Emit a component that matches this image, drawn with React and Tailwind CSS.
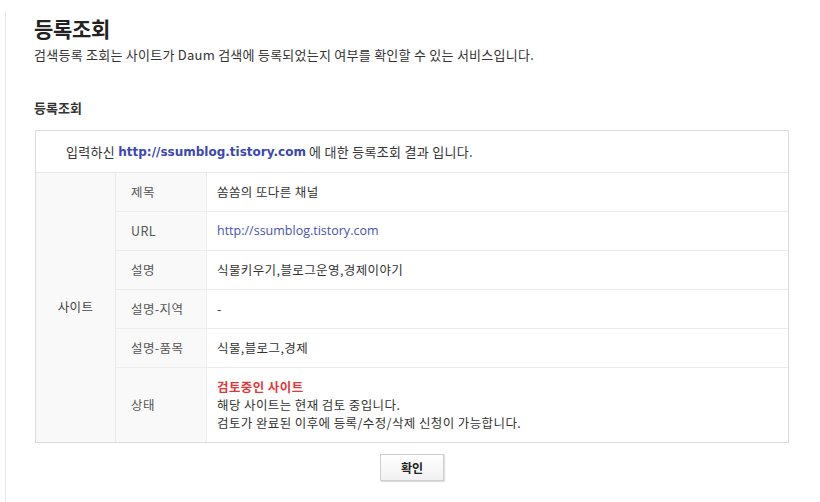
import React from 'react'

const rows = [
  { label: '제목', value: '쏨쏨의 또다른 채널' },
  { label: 'URL', value: 'http://ssumblog.tistory.com', link: true },
  { label: '설명', value: '식물키우기,블로그운영,경제이야기' },
  { label: '설명-지역', value: '-' },
  { label: '설명-품목', value: '식물,블로그,경제' },
]

const kr = { fontFamily: '"Noto Sans CJK KR", "Noto Sans", sans-serif' }

const App = () => {
  return (
    <div className="w-[820px] h-[502px] bg-white overflow-hidden" style={kr}>
      <div className="ml-[5px] mt-3 h-[490px] border-l border-[#e6e6e6] pl-[28px]">
        <h2 className="pt-[2px] text-[21px] font-bold leading-[28px] text-[#222] tracking-[-0.3px]">등록조회</h2>
        <p className="mt-[4px] text-[13px] leading-[18px] text-[#333] tracking-[0.25px]">
          검색등록 조회는 사이트가 Daum 검색에 등록되었는지 여부를 확인할 수 있는 서비스입니다.
        </p>

        <h3 className="mt-[35px] text-[13px] font-bold leading-[18px] text-[#333]">등록조회</h3>

        <div className="mt-[13px] ml-[1px] w-[754px] border border-[#dcdcdc] text-[12.5px] text-[#333] tracking-[0.4px]">
          <div className="h-[42px] flex items-center pl-[30px] border-b border-[#e8e8e8] text-[13px] tracking-[0.3px]">
            입력하신&nbsp;
            <span
              className="font-bold text-[#3b47b3] text-[12px] tracking-normal"
              style={{ fontFamily: '"DejaVu Sans", Verdana, sans-serif' }}
            >
              http://ssumblog.tistory.com
            </span>
            &nbsp;에 대한 등록조회 결과 입니다.
          </div>

          <div className="flex">
            <div className="w-[80px] shrink-0 bg-[#f9f9f9] border-r border-[#e8e8e8] flex items-center justify-center text-[#444]">
              사이트
            </div>
            <div className="flex-1">
              {rows.map((r) => (
                <div key={r.label} className="flex h-[39px] border-b border-[#ececec]">
                  <div className="w-[91px] shrink-0 bg-[#f9f9f9] border-r border-[#ececec] flex items-center pl-[15px] text-[#555]">
                    {r.label}
                  </div>
                  <div className="flex-1 flex items-center pl-[10px]">
                    {r.link ? (
                      <span
                        className="text-[#4654b0] text-[12.5px] tracking-normal"
                        style={{ fontFamily: '"Open Sans", "Liberation Sans", sans-serif' }}
                      >
                        {r.value}
                      </span>
                    ) : (
                      r.value
                    )}
                  </div>
                </div>
              ))}
              <div className="flex h-[74px]">
                <div className="w-[91px] shrink-0 bg-[#f9f9f9] border-r border-[#ececec] flex items-center pl-[15px] text-[#555]">
                  상태
                </div>
                <div className="flex-1 flex flex-col justify-center pl-[10px] leading-[18px]">
                  <span className="font-bold text-[#e2373a]">검토중인 사이트</span>
                  <span>해당 사이트는 현재 검토 중입니다.</span>
                  <span>검토가 완료된 이후에 등록/수정/삭제 신청이 가능합니다.</span>
                </div>
              </div>
            </div>
          </div>
        </div>

        <div className="mt-[11px] w-[756px] flex justify-center">
          <button className="w-[64px] h-[27px] border border-[#cfcfcf] bg-gradient-to-b from-white to-[#f1f1f1] shadow-[1px_1px_1px_rgba(0,0,0,0.12)] text-[12px] font-bold text-[#222]">
            확인
          </button>
        </div>
      </div>
    </div>
  )
}

export default App
